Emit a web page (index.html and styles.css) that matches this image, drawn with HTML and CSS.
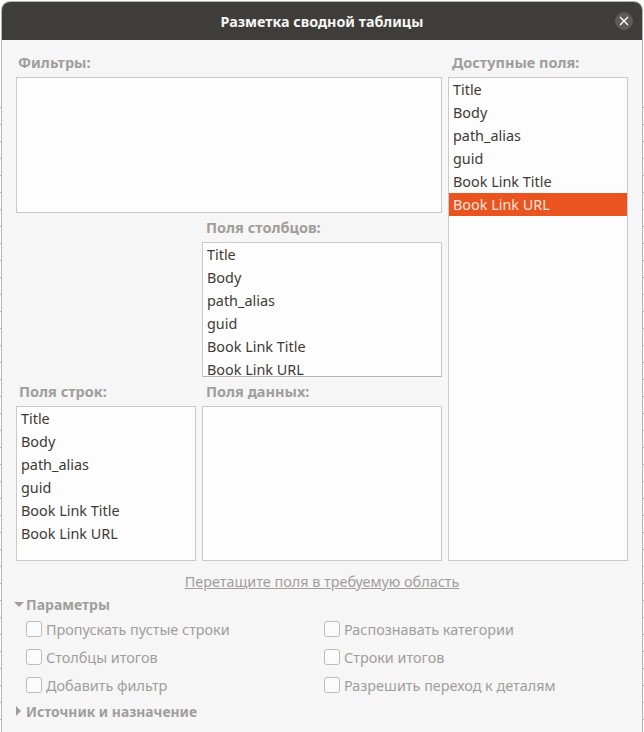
FILE: index.html
```html
<!DOCTYPE html>
<html lang="ru">
<head>
  <meta charset="UTF-8" />
  <title>Разметка сводной таблицы</title>
  <link rel="stylesheet" href="styles.css">
</head>
<body>
  <div class="window">
    <header class="titlebar">
      <span class="title">Разметка сводной таблицы</span>
      <span class="close-btn">
        <svg width="10" height="10" viewBox="0 0 10 10"><path d="M1 1 9 9M9 1 1 9" stroke="#fff" stroke-width="1.4" fill="none"/></svg>
      </span>
    </header>

    <main class="content">
      <div class="layout">
        <!-- Filters -->
        <div class="label filters-label">Фильтры:</div>
        <div class="box filters-box"></div>

        <!-- Available fields -->
        <div class="label available-label">Доступные поля:</div>
        <ul class="box available-box">
          <li>Title</li>
          <li>Body</li>
          <li>path_alias</li>
          <li>guid</li>
          <li>Book Link Title</li>
          <li class="selected">Book Link URL</li>
        </ul>

        <!-- Columns -->
        <div class="label columns-label">Поля столбцов:</div>
        <ul class="box columns-box">
          <li>Title</li>
          <li>Body</li>
          <li>path_alias</li>
          <li>guid</li>
          <li>Book Link Title</li>
          <li>Book Link URL</li>
        </ul>

        <!-- Rows -->
        <div class="label rows-label">Поля строк:</div>
        <ul class="box rows-box">
          <li>Title</li>
          <li>Body</li>
          <li>path_alias</li>
          <li>guid</li>
          <li>Book Link Title</li>
          <li>Book Link URL</li>
        </ul>

        <!-- Data -->
        <div class="label data-label">Поля данных:</div>
        <div class="box data-box"></div>
      </div>

      <div class="hint"><span>Перетащите поля в требуемую область</span></div>

      <div class="expander">
        <span class="arrow-down"></span>
        <span>Параметры</span>
      </div>
      <div class="options">
        <label class="option"><span class="check"></span>Пропускать пустые строки</label>
        <label class="option"><span class="check"></span>Распознавать категории</label>
        <label class="option"><span class="check"></span>Столбцы итогов</label>
        <label class="option"><span class="check"></span>Строки итогов</label>
        <label class="option"><span class="check"></span>Добавить фильтр</label>
        <label class="option"><span class="check"></span>Разрешить переход к деталям</label>
      </div>
      <div class="expander expander-source">
        <span class="arrow-right"></span>
        <span>Источник и назначение</span>
      </div>
    </main>
  </div>
</body>
</html>
```

FILE: styles.css
```css
:root {
  --title-bg: #3f3d3a;
  --panel-bg: #f6f6f6;
  --border-color: #c9c9c7;
  --muted: #a09e9b;
  --text: #3d3a36;
  --accent: #e95420;
}

* {
  box-sizing: border-box;
}

html, body {
  height: 100%;
}

body {
  margin: 0;
  padding: 2px 2px 0 2px;
  /* spreadsheet grid lines peeking out behind the dialog */
  background: #fff repeating-linear-gradient(#fff 0 16px, #b5b5b5 16px 17px) 0 91px / 100% 642px no-repeat;
  overflow: hidden;
  font-family: "Noto Sans", "Open Sans", sans-serif;
  font-size: 14.4px;
  color: var(--text);
}

.window {
  height: 730px;
  background: var(--panel-bg);
  border-radius: 8px 8px 0 0;
  box-shadow: 0 0 0 1px #b4b4b4;
  overflow: hidden;
  display: flex;
  flex-direction: column;
}

.titlebar {
  height: 38px;
  flex: none;
  background: var(--title-bg);
  display: flex;
  align-items: center;
  justify-content: center;
  position: relative;
}

.title {
  color: #f5f5f4;
  font-weight: 700;
  font-size: 14.3px;
}

.close-btn {
  position: absolute;
  right: 9px;
  top: 10px;
  width: 18px;
  height: 18px;
  border-radius: 50%;
  background: #5d5b58;
  display: flex;
  align-items: center;
  justify-content: center;
}

.content {
  padding: 12px 14px 0;
}

.layout {
  display: grid;
  grid-template-columns: 180px 240px 180px;
  grid-template-rows: 25px 136px 29px 135px 29px 155px;
  column-gap: 6px;
}

.label {
  color: var(--muted);
  font-weight: 700;
  font-size: 14.5px;
  line-height: 20px;
  padding-left: 3px;
  white-space: nowrap;
}

.box {
  margin: 0;
  padding: 0;
  list-style: none;
  background: #fdfdfd;
  border: 1px solid var(--border-color);
  overflow: hidden;
}

.box li {
  height: 23px;
  line-height: 23px;
  padding-left: 4px;
  white-space: nowrap;
}

.box li.selected {
  background: var(--accent);
  color: #fbe6dd;
}

.filters-label { grid-column: 1 / 3; grid-row: 1; padding-left: 2px; }
.filters-box { grid-column: 1 / 3; grid-row: 2; }
.available-label { grid-column: 3; grid-row: 1; padding-left: 4px; }
.available-box { grid-column: 3; grid-row: 2 / 7; }
.columns-label { grid-column: 2; grid-row: 3; padding-left: 4px; padding-top: 4px; }
.columns-box { grid-column: 2; grid-row: 4; border-bottom-color: #b4b4b2; }
.rows-label { grid-column: 1; grid-row: 5; padding-top: 4px; }
.rows-box { grid-column: 1; grid-row: 6; }
.data-label { grid-column: 2; grid-row: 5; padding-left: 4px; padding-top: 4px; }
.data-box { grid-column: 2; grid-row: 6; }

.hint {
  margin-top: 11px;
  text-align: center;
  color: var(--muted);
  line-height: 20px;
}

.hint span {
  text-decoration: underline;
}

.expander {
  display: flex;
  align-items: center;
  gap: 2px;
  margin-top: 2px;
  height: 20px;
  font-weight: 700;
  font-size: 14px;
  color: var(--muted);
}

.arrow-down {
  width: 0;
  height: 0;
  margin-left: -2px;
  border-left: 5px solid transparent;
  border-right: 5px solid transparent;
  border-top: 5px solid var(--muted);
}

.arrow-right {
  width: 0;
  height: 0;
  margin-right: 3px;
  border-top: 5px solid transparent;
  border-bottom: 5px solid transparent;
  border-left: 5px solid var(--muted);
}

.expander-source span:last-child {
  font-size: 13.85px;
}

.options {
  display: grid;
  grid-template-columns: 298px 1fr;
  grid-auto-rows: 28px;
  padding-left: 10px;
  margin-top: 1px;
}

.option {
  display: flex;
  align-items: center;
  gap: 4px;
  color: var(--muted);
  white-space: nowrap;
}

.check {
  width: 16px;
  height: 16px;
  background: #fcfcfc;
  border: 1px solid #bdbcba;
  border-radius: 3px;
  flex: none;
}

.expander-source {
  margin-top: 2px;
}
```
